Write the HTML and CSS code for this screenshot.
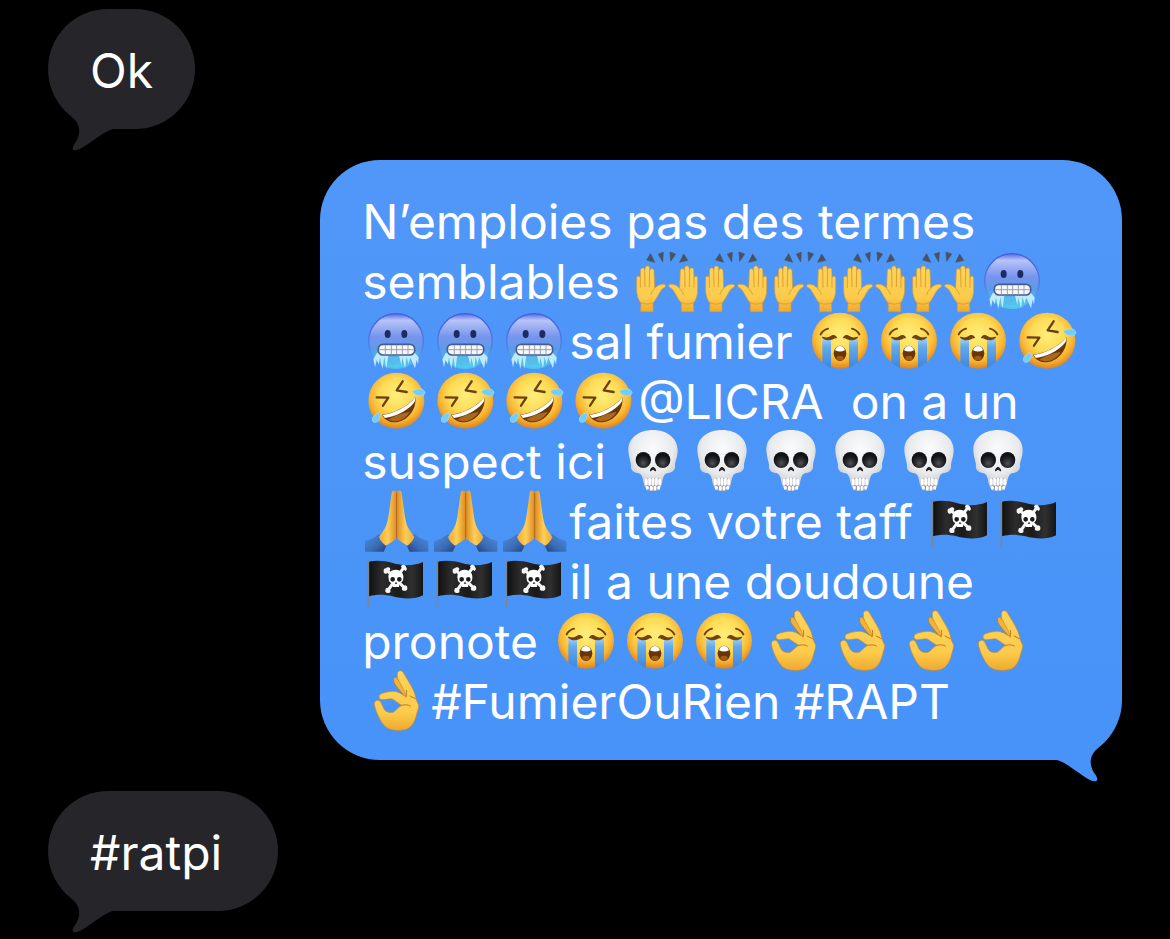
FILE: index.html
```html
<!DOCTYPE html>
<html lang="fr">
<head>
<meta charset="utf-8">
<meta name="viewport" content="width=device-width, initial-scale=1">
<title>Messages</title>
<link rel="stylesheet" href="styles.css">
</head>
<body>
<svg class="sprite" aria-hidden="true">
  <defs>
    <radialGradient id="g-face" cx=".5" cy=".4" r=".6"><stop offset="0" stop-color="#ffee7c"/><stop offset=".5" stop-color="#fddb55"/><stop offset=".78" stop-color="#f8b433"/><stop offset="1" stop-color="#de831a"/></radialGradient>
    <linearGradient id="g-cold" x1="0" y1="0" x2="0" y2="1"><stop offset="0" stop-color="#5269e6"/><stop offset=".12" stop-color="#b9c4f8"/><stop offset=".42" stop-color="#7794ed"/><stop offset=".65" stop-color="#5a9bea"/><stop offset="1" stop-color="#50d0ee"/></linearGradient>
    <linearGradient id="g-rim" x1="0" y1="0" x2="0" y2="1"><stop offset="0" stop-color="#435ce0"/><stop offset=".6" stop-color="#4b7ee6"/><stop offset="1" stop-color="#4fc3f0"/></linearGradient>
    <linearGradient id="g-tear" x1="0" y1="0" x2="0" y2="1"><stop offset="0" stop-color="#a8d3f5"/><stop offset=".3" stop-color="#63a9eb"/><stop offset="1" stop-color="#3e86e0"/></linearGradient>
    <linearGradient id="g-hand" x1="0" y1="0" x2="0" y2="1"><stop offset="0" stop-color="#fdd35a"/><stop offset=".7" stop-color="#fccb4c"/><stop offset="1" stop-color="#efa92f"/></linearGradient>
    <linearGradient id="g-palm" x1="0" y1="0" x2="1" y2="0"><stop offset="0" stop-color="#f0a934"/><stop offset=".5" stop-color="#fdcf55"/><stop offset="1" stop-color="#dd8b22"/></linearGradient>
    <linearGradient id="g-sleeve" x1="0" y1="0" x2="1" y2="1"><stop offset="0" stop-color="#4a8fe4"/><stop offset=".6" stop-color="#3a6cb4"/><stop offset="1" stop-color="#243f77"/></linearGradient>
    <radialGradient id="g-skull" cx=".5" cy=".3" r=".7"><stop offset="0" stop-color="#fafbfc"/><stop offset=".6" stop-color="#e8eaec"/><stop offset="1" stop-color="#b4bac2"/></radialGradient>
    <radialGradient id="g-socket" cy=".7"><stop offset="0" stop-color="#505256"/><stop offset=".6" stop-color="#25272a"/><stop offset="1" stop-color="#111214"/></radialGradient>
    <linearGradient id="g-flag" x1="0" y1="0" x2="1" y2="0"><stop offset="0" stop-color="#111"/><stop offset=".25" stop-color="#2c2c2d"/><stop offset=".55" stop-color="#1a1a1b"/><stop offset=".8" stop-color="#303031"/><stop offset="1" stop-color="#151515"/></linearGradient>
    <g id="one-hand">
      <path fill="url(#g-hand)" stroke="#dc9a2e" stroke-width="2" d="M35 215L36 190C28 180 23 165 23 150L23 114C23 107 33 107 34 114L35 90C36 82 46 82 47 90L49 83C50 76 61 76 62 84L63 91C65 84 75 85 75 93L77 145C84 137 95 132 104 133C112 134 111 141 105 143C93 148 88 170 72 189L72 215Z"/>
      <path fill="none" stroke="#dda033" stroke-width="3" stroke-linecap="round" d="M34 114V142M47 90L48 140M62 86L61 141M77 146C70 151 67 158 66 163M37 188C48 194 61 194 71 188"/>
    </g>
    <g id="one-palm">
      <path fill="url(#g-sleeve)" d="M12 168C28 164 44 156 54 146L78 180L68 200H12Z"/>
      <path fill="url(#g-palm)" d="M107 24C106 14 93 14 92 24L85 75C82 100 78 122 69 134L54 156C58 168 66 176 75 182C86 172 98 171 107 158Z"/>
    </g>
  </defs>

  <symbol id="raised" viewBox="0 0 207 180" overflow="visible"><g transform="translate(-12 -30)">
    <use href="#one-hand"/><use href="#one-hand" transform="translate(229 0) scale(-1 1)"/>
    <path fill="#48535f" stroke="#48535f" stroke-width="2" stroke-linejoin="round" d="M53 60L65 41L77 67ZM88 42L103 37L101 66ZM123 36L140 42L125 64ZM152 67L164 42L176 61Z"/>
  </g></symbol>

  <symbol id="cold" viewBox="0 0 207 180" overflow="visible"><g transform="translate(-3 -15)">
    <circle cx="105" cy="108" r="82" fill="url(#g-cold)" stroke="url(#g-rim)" stroke-width="4"/>
    <ellipse cx="80" cy="87" rx="9" ry="12" fill="#1c2c60"/><ellipse cx="130" cy="87" rx="9" ry="12" fill="#1c2c60"/>
    <path fill="#c9f2fb" opacity=".9" d="M37 163L42 187L47 165L53 178L57 158L64 192L70 156L76 191L82 152H114L121 180L124 158L132 190L137 156L142 176L148 158L162 190L167 164L171 179L173 157L161 143H48Z"/>
    <path fill="#56bdea" d="M81 156H113L116 169L105 166L94 184L84 170Z"/>
    <rect x="52" y="118" width="109" height="32" rx="14" fill="#f7f7fa" stroke="#445c8e" stroke-width="5"/>
    <path stroke="#9b9fb0" stroke-width="3" fill="none" d="M55 134H158M73 120V148M91 120V148M107 120V148M124 120V148M141 120V148"/>
  </g></symbol>

  <symbol id="cry" viewBox="0 0 207 180" overflow="visible"><g transform="translate(-12 -15)">
    <circle cx="114" cy="107" r="84" fill="url(#g-face)"/>
    <path fill="url(#g-tear)" d="M61 98H87V188Q73 183 61 173ZM141 98H168V172Q155 184 141 188Z"/>
    <path fill="none" stroke="#71410f" stroke-width="6" stroke-linecap="round" d="M56 88C60 80 68 74 78 71M150 71C160 74 168 80 172 88"/>
    <path fill="#71410f" stroke="#71410f" stroke-width="4" stroke-linejoin="round" d="M62 97C70 100 80 100 87 95C93 89 99 92 103 98C98 97 95 99 90 102C80 106 68 104 62 97ZM166 97C158 100 148 100 141 95C135 89 129 92 125 98C130 97 133 99 138 102C148 106 160 104 166 97Z"/>
    <ellipse cx="114" cy="145" rx="19" ry="23" fill="#693505"/>
    <path fill="#fff" d="M99 136C102 119 126 119 129 136Q114 143 99 136Z"/>
    <ellipse cx="114" cy="159" rx="11" ry="7" fill="#9d5c16"/>
  </g></symbol>

  <symbol id="rofl" viewBox="0 0 207 180" overflow="visible"><g transform="translate(-3 -375)">
    <circle cx="106" cy="467" r="84" fill="url(#g-face)"/>
    <path fill="none" stroke="#6d3f0d" stroke-width="7" stroke-linecap="round" stroke-linejoin="round" d="M47 457L82 458L66 482M125 409L107 436L137 441"/>
    <path fill="#6c3706" d="M63 509C97 505 140 486 163 456C169 493 137 530 104 532C84 532 69 523 63 509Z"/>
    <path fill="#fff" d="M64 510C98 505 140 487 163 456Q164 468 158 475C137 499 101 516 72 519Z"/>
    <path fill="#a86a21" d="M82 524C99 511 125 505 146 500C137 519 111 537 82 524Z"/>
    <path fill="#75cdf4" stroke="#a7e4f7" stroke-width="2" d="M154 440C163 430 190 427 192 443C188 458 166 455 154 440ZM57 503C61 520 50 536 37 531C28 520 41 506 57 503Z"/>
  </g></symbol>

  <symbol id="skull" viewBox="0 0 207 180" overflow="visible"><g transform="translate(3 -15)">
    <path fill="url(#g-skull)" d="M99 15C55 15 24 41 25 75C26 96 31 105 33 119C30 136 42 143 57 145C68 150 68 162 71 175C74 191 83 198 98 198C115 198 123 191 126 175C129 159 130 150 140 145C155 143 168 136 165 119C167 104 173 95 173 75C173 41 142 15 99 15Z"/>
    <path fill="#8b8f95" d="M75 163Q99 154 123 163L119 192Q99 200 79 192Z"/>
    <ellipse cx="70" cy="105" rx="23" ry="24" fill="url(#g-socket)"/><ellipse cx="128" cy="105" rx="23" ry="24" fill="url(#g-socket)"/>
    <path fill="#202225" d="M99 125C92 128 87 138 92 139L99 134L106 139C112 138 106 128 99 125Z"/>
    <path stroke="#fff" stroke-width="9" stroke-linecap="round" d="M79 165V177M89 163V178M99 162V178M109 163V178M119 165V177M82 187V190M94 187V192M105 187V192M116 187V190"/>
  </g></symbol>

  <symbol id="pray" viewBox="0 0 207 180" overflow="visible"><g transform="translate(-3 -15)">
    <use href="#one-palm"/><use href="#one-palm" transform="translate(214 0) scale(-1 1)"/>
    <path stroke="#b2661b" stroke-width="3" stroke-linecap="round" d="M107 25V158"/>
  </g></symbol>

  <symbol id="flag" viewBox="0 0 207 180" overflow="visible"><g transform="translate(-3 -195)">
    <path fill="url(#g-flag)" d="M24 230C45 225 75 228 95 234C125 243 160 243 186 231V331C160 344 125 342 95 334C70 328 45 328 24 334Z"/>
    <path stroke="#7b8794" stroke-width="5" stroke-linecap="round" d="M22 228V366"/>
    <path stroke="#f5f5f5" stroke-width="9" stroke-linecap="round" d="M80 258L129 307M128 248L81 316"/>
    <path fill="#f5f5f5" d="M68 258a7 7 0 0 1 7-8a7 7 0 0 1 13 4l-9 11a7 7 0 0 1-11-7ZM120 246a7 7 0 0 1 10-6a6 6 0 0 1 5 6a7 7 0 0 1-2 12ZM73 315a7 7 0 0 1 7-7l9 9a7 7 0 0 1-8 7a7 7 0 0 1-8-9ZM122 311l9-10a7 7 0 0 1 8 8a7 7 0 0 1-9 8a7 7 0 0 1-8-6Z"/>
    <path fill="#fff" d="M104 254C86 254 80 268 83 281C83 290 88 293 94 295L96 306H114L116 295C122 293 127 289 127 280C129 267 121 254 104 254Z"/>
    <path fill="#1b1b1c" d="M88 283a7 7 0 0 1 14 0a7 7 0 0 1-14 0ZM108 283a7 7 0 0 1 14 0a7 7 0 0 1-14 0ZM105 290L109 296H101Z"/>
  </g></symbol>

  <symbol id="ok" viewBox="0 0 207 180" overflow="visible"><g transform="translate(0 -15)">
    <path fill="#f0b23b" stroke="#b97418" stroke-width="2" d="M95 40C99 33 105 38 108 44L142 84L128 94C119 82 102 65 95 51Z"/>
    <path fill="url(#g-hand)" stroke="#cb8a26" stroke-width="2" d="M106 25C108 15 119 15 123 22C133 38 148 62 156 80C161 91 161 105 167 114C174 124 167 134 164 147C160 166 151 188 130 194C106 199 78 196 65 180C52 163 40 137 37 117C36 107 48 102 54 108C58 113 62 125 68 135C74 142 84 144 93 142C101 139 108 126 120 121C108 115 100 107 91 102C81 100 70 105 59 104C48 101 49 90 58 86C72 81 91 77 103 80C116 83 124 92 132 94C130 77 112 53 106 38Z"/>
    <path fill="none" stroke="#c1791d" stroke-width="3" stroke-linecap="round" d="M133 76C135 84 134 92 132 96M120 121C130 118 139 119 145 123M144 93L160 101"/>
  </g></symbol>

  <symbol id="tail" viewBox="114 327 150 126">
    <path d="M125 350C148 368 156 395 138 425C124 443 126 452 138 451C165 446 220 392 250 387L234 327H125Z"/>
  </symbol>
</svg>

<main class="thread">
  <article class="bubble received">
    <p class="line">Ok</p>
    <svg class="tail" aria-hidden="true"><use href="#tail"/></svg>
  </article>

  <article class="bubble sent">
    <p class="line">N’emploies pas des termes</p>
    <p class="line"><span>semblables </span><svg class="emoji"><use href="#raised"/></svg><svg class="emoji"><use href="#raised"/></svg><svg class="emoji"><use href="#raised"/></svg><svg class="emoji"><use href="#raised"/></svg><svg class="emoji"><use href="#raised"/></svg><svg class="emoji"><use href="#cold"/></svg></p>
    <p class="line"><svg class="emoji"><use href="#cold"/></svg><svg class="emoji"><use href="#cold"/></svg><svg class="emoji"><use href="#cold"/></svg><span>sal fumier </span><svg class="emoji"><use href="#cry"/></svg><svg class="emoji"><use href="#cry"/></svg><svg class="emoji"><use href="#cry"/></svg><svg class="emoji"><use href="#rofl"/></svg></p>
    <p class="line"><svg class="emoji"><use href="#rofl"/></svg><svg class="emoji"><use href="#rofl"/></svg><svg class="emoji"><use href="#rofl"/></svg><svg class="emoji"><use href="#rofl"/></svg><span>@LICRA  on a un</span></p>
    <p class="line"><span>suspect ici </span><svg class="emoji"><use href="#skull"/></svg><svg class="emoji"><use href="#skull"/></svg><svg class="emoji"><use href="#skull"/></svg><svg class="emoji"><use href="#skull"/></svg><svg class="emoji"><use href="#skull"/></svg><svg class="emoji"><use href="#skull"/></svg></p>
    <p class="line"><svg class="emoji"><use href="#pray"/></svg><svg class="emoji"><use href="#pray"/></svg><svg class="emoji"><use href="#pray"/></svg><span>faites votre taff </span><svg class="emoji"><use href="#flag"/></svg><svg class="emoji"><use href="#flag"/></svg></p>
    <p class="line"><svg class="emoji"><use href="#flag"/></svg><svg class="emoji"><use href="#flag"/></svg><svg class="emoji"><use href="#flag"/></svg><span>il a une doudoune</span></p>
    <p class="line"><span>pronote </span><svg class="emoji"><use href="#cry"/></svg><svg class="emoji"><use href="#cry"/></svg><svg class="emoji"><use href="#cry"/></svg><svg class="emoji"><use href="#ok"/></svg><svg class="emoji"><use href="#ok"/></svg><svg class="emoji"><use href="#ok"/></svg><svg class="emoji"><use href="#ok"/></svg></p>
    <p class="line"><svg class="emoji"><use href="#ok"/></svg><span>#FumierOuRien #RAPT</span></p>
    <svg class="tail" aria-hidden="true"><use href="#tail"/></svg>
  </article>

  <article class="bubble received">
    <p class="line">#ratpi </p>
    <svg class="tail" aria-hidden="true"><use href="#tail"/></svg>
  </article>
</main>
</body>
</html>
```
FILE: styles.css
```css
body {
  margin: 0;
  background: #000;
  color: #fff;
  font-family: Inter, Roboto, "Liberation Sans", sans-serif;
  font-size: 48px;
  line-height: 60px;
}

.sprite {
  position: absolute;
  width: 0;
  height: 0;
}

.thread {
  display: flex;
  flex-direction: column;
  gap: 31px;
  padding: 9px 48px 28px;
}

.bubble {
  position: relative;
  padding: 32px 42px 28px;
  border-radius: 60px;
}

.received {
  align-self: flex-start;
  background: #26252a;
}

.sent {
  align-self: flex-end;
  padding-right: 40px;
  background: linear-gradient(#5097f8, #4793f9);
}

.line {
  display: flex;
  align-items: center;
  height: 60px;
  margin: 0;
  white-space: pre;
}

.emoji {
  flex: none;
  width: 69px;
  height: 60px;
  margin-bottom: 4px;
  overflow: visible;
}

.tail {
  position: absolute;
  bottom: -22px;
  left: 20px;
  width: 50px;
  height: 42px;
  fill: #26252a;
}

.sent .tail {
  right: 20px;
  left: auto;
  fill: #4793f9;
  transform: scaleX(-1);
}
```
